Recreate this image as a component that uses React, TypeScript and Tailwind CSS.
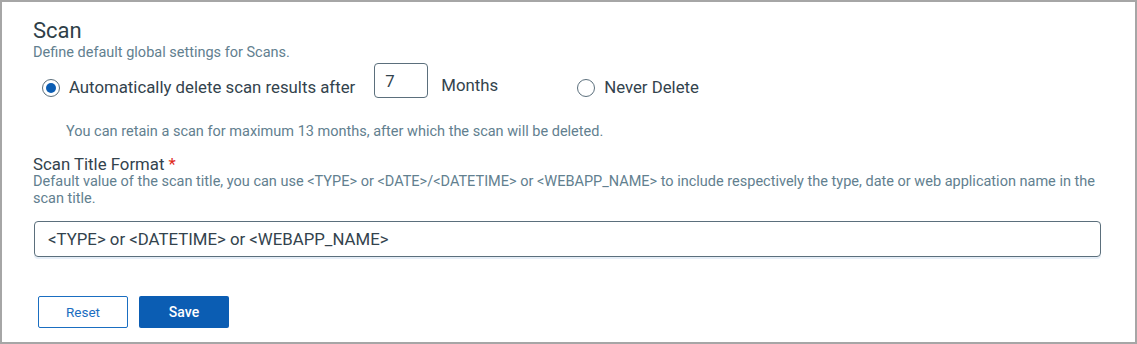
import { useState } from 'react';

function Radio({ checked, label, onSelect }: { checked: boolean; label: string; onSelect: () => void }) {
    return (
        <label className="flex items-center gap-[9px] cursor-pointer" onClick={onSelect}>
            <span className="w-[18px] h-[18px] rounded-full border border-[#5b6f7c] flex items-center justify-center bg-white">
                {checked && <span className="w-[10px] h-[10px] rounded-full bg-[#0b5db3]" />}
            </span>
            <span className="text-[16.8px] text-[#33434d]">{label}</span>
        </label>
    );
}

export default function App() {
    const [mode, setMode] = useState<'auto' | 'never'>('auto');
    const [months, setMonths] = useState('7');
    const [format, setFormat] = useState('<TYPE> or <DATETIME> or <WEBAPP_NAME>');

    return (
        <div className="w-[1137px] h-[344px] bg-white border-2 border-[#a6a6a6] pl-[31px] pr-[32px] pt-[16px] font-['Roboto',sans-serif] text-[#33434d]">
            <h2 className="text-[22px] leading-[26px] text-[#2f3f48]">Scan</h2>
            <p className="text-[14.5px] leading-[17px] text-[#62808f]">Define default global settings for Scans.</p>

            <div className="flex items-center h-[48px] mt-[3px] pl-[9px]">
                <Radio
                    checked={mode === 'auto'}
                    label="Automatically delete scan results after"
                    onSelect={() => setMode('auto')}
                />
                <input
                    value={months}
                    onChange={e => setMonths(e.target.value)}
                    className="ml-[19px] mb-[15px] w-[54px] h-[35px] border border-[#5b6f7c] rounded-[4px] px-[10px] text-[16.8px] text-[#33434d] outline-none"
                />
                <span className="ml-[13px] mb-[4px] text-[16.8px] text-[#33434d]">Months</span>
                <div className="ml-[79px]">
                    <Radio checked={mode === 'never'} label="Never Delete" onSelect={() => setMode('never')} />
                </div>
            </div>

            <p className="mt-[11px] pl-[33px] text-[14.5px] leading-[17px] text-[#62808f]">
                You can retain a scan for maximum 13 months, after which the scan will be deleted.
            </p>

            <div className="mt-[14px] text-[16.8px] leading-[20px] text-[#33434d]">
                Scan Title Format <span className="text-[#e0291b]">*</span>
            </div>
            <p className="text-[14.5px] leading-[16.5px] text-[#62808f]">
                Default value of the scan title, you can use &lt;TYPE&gt; or &lt;DATE&gt;/&lt;DATETIME&gt; or
                &lt;WEBAPP_NAME&gt; to include respectively the type, date or web application name in the scan title.
            </p>

            <input
                value={format}
                onChange={e => setFormat(e.target.value)}
                className="mt-[14px] ml-[1px] w-[1067px] h-[36px] border border-[#5b6f7c] rounded-[4px] px-[13px] text-[16.8px] text-[#33434d] outline-none shadow-[0_2px_0_#e6eef7]"
            />

            <div className="flex gap-[11px] mt-[39px] pl-[5px]">
                <button className="w-[90px] h-[32px] border border-[#1a6ec1] rounded-[2px] bg-white text-[13.5px] text-[#1a6ec1]">
                    Reset
                </button>
                <button className="w-[90px] h-[32px] rounded-[2px] bg-[#0b5db3] text-[14px] font-medium text-white">
                    Save
                </button>
            </div>
        </div>
    );
}
